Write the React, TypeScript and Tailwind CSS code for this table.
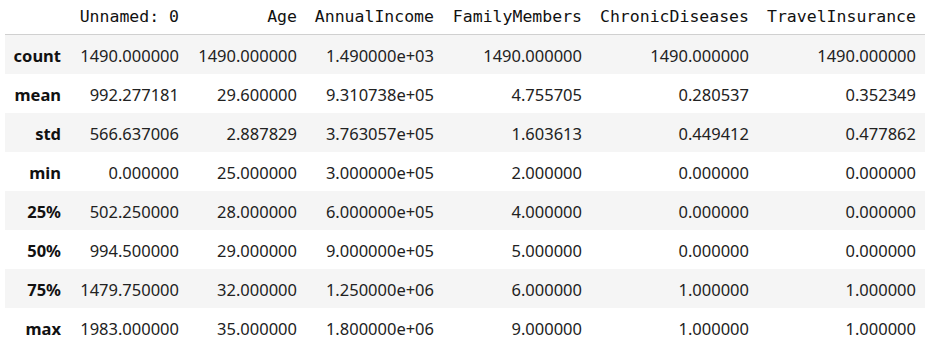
import React from "react";

const columns = ["Unnamed: 0", "Age", "AnnualIncome", "FamilyMembers", "ChronicDiseases", "TravelInsurance"];

const rows: [string, string[]][] = [
  ["count", ["1490.000000", "1490.000000", "1.490000e+03", "1490.000000", "1490.000000", "1490.000000"]],
  ["mean", ["992.277181", "29.600000", "9.310738e+05", "4.755705", "0.280537", "0.352349"]],
  ["std", ["566.637006", "2.887829", "3.763057e+05", "1.603613", "0.449412", "0.477862"]],
  ["min", ["0.000000", "25.000000", "3.000000e+05", "2.000000", "0.000000", "0.000000"]],
  ["25%", ["502.250000", "28.000000", "6.000000e+05", "4.000000", "0.000000", "0.000000"]],
  ["50%", ["994.500000", "29.000000", "9.000000e+05", "5.000000", "0.000000", "0.000000"]],
  ["75%", ["1479.750000", "32.000000", "1.250000e+06", "6.000000", "1.000000", "1.000000"]],
  ["max", ["1983.000000", "35.000000", "1.800000e+06", "9.000000", "1.000000", "1.000000"]],
];

const grid = "grid grid-cols-[65px_118px_118px_137px_148px_167px_167px]";

export default function App() {
  return (
    <div className="w-[933px] h-[347px] bg-white overflow-hidden">
      <div className="ml-[5px] w-[920px] text-[#222]">
        <div
          className={`${grid} h-[35px] border-b border-[#d0d0d0] items-center text-[16.5px] text-[#111]`}
          style={{ fontFamily: '"DejaVu Sans Mono", "Liberation Mono", monospace' }}
        >
          <div />
          {columns.map((c) => (
            <div key={c} className="text-right pr-[9px] whitespace-pre">
              {c}
            </div>
          ))}
        </div>
        {rows.map(([label, values], i) => (
          <div
            key={label}
            className={`${grid} h-[39px] pt-[4px] items-center text-[16.5px] ${i % 2 === 0 ? "bg-[#f5f5f5]" : "bg-white"}`}
            style={{ fontFamily: '"Noto Sans", "Open Sans", sans-serif' }}
          >
            <div className="text-right pr-[9px] font-bold text-[#111]">{label}</div>
            {values.map((v, j) => (
              <div key={j} className="text-right pr-[9px]">
                {v}
              </div>
            ))}
          </div>
        ))}
      </div>
    </div>
  );
}
